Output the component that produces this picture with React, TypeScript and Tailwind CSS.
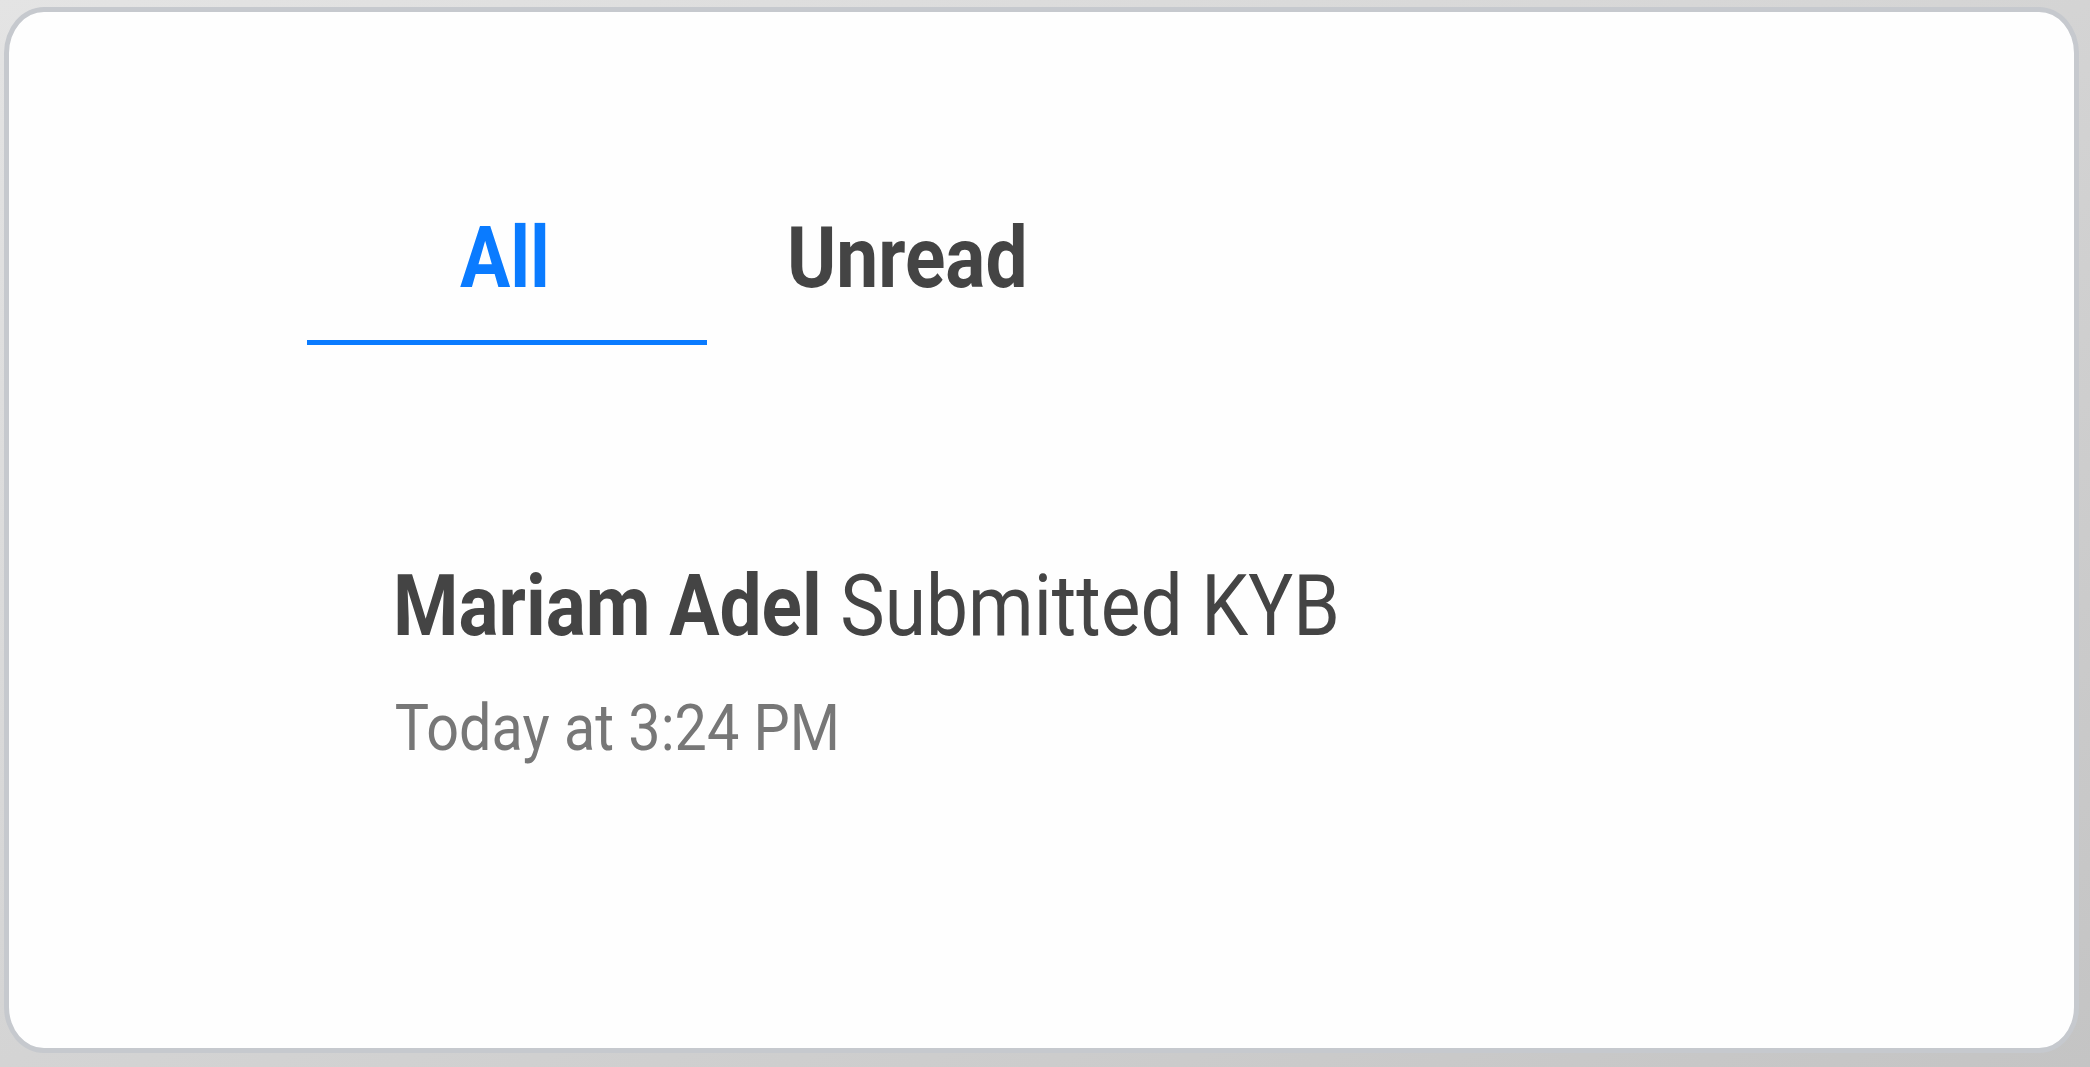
import { useState } from 'react'

type Tab = 'all' | 'unread'

interface INotification {
   name: string
   action: string
   time: string
}

const notifications: INotification[] = [
   { name: 'Mariam Adel', action: 'Submitted KYB', time: 'Today at 3:24 PM' },
]

export default function App() {
   const [tab, setTab] = useState<Tab>('all')

   return (
      <div
         className="w-[2090px] h-[1067px] overflow-hidden bg-gradient-to-br from-[#e4e4e4] via-[#d4d4d4] to-[#c4c4c4] pt-[7px] pl-[4px]"
         style={{ fontFamily: 'Roboto, "Liberation Sans", sans-serif' }}
      >
         <div className="w-[2075px] h-[1046px] rounded-[40px/46px] border-[5px] border-[#c6c9ce] bg-[#fefefe]">
            <div className="flex pl-[298px] pt-[203px]">
               <button
                  type="button"
                  className="flex flex-col items-start w-[400px]"
                  onClick={() => setTab('all')}
               >
                  <div className="pl-[153px]">
                     <span
                        className={`block text-[86px] leading-none font-bold scale-x-[0.87] origin-left ${
                           tab === 'all' ? 'text-[#0a7bff]' : 'text-[#444444]'
                        }`}
                     >
                        All
                     </span>
                  </div>
                  <span
                     className={`mt-[39px] h-[5px] w-[400px] ${
                        tab === 'all' ? 'bg-[#0a7bff]' : 'bg-transparent'
                     }`}
                  />
               </button>
               <button
                  type="button"
                  className="flex flex-col items-start w-[400px]"
                  onClick={() => setTab('unread')}
               >
                  <div className="pl-[80px]">
                     <span
                        className={`block text-[86px] leading-none font-bold scale-x-[0.87] origin-left ${
                           tab === 'unread' ? 'text-[#0a7bff]' : 'text-[#444444]'
                        }`}
                     >
                        Unread
                     </span>
                  </div>
                  <span
                     className={`mt-[39px] h-[5px] w-[400px] ${
                        tab === 'unread' ? 'bg-[#0a7bff]' : 'bg-transparent'
                     }`}
                  />
               </button>
            </div>

            <div className="flex flex-col pl-[384px] pt-[218px]">
               {notifications.map((n) => (
                  <div key={n.name} className="flex flex-col">
                     <p className="text-[86px] leading-none text-[#444444] whitespace-nowrap scale-x-[0.87] origin-left">
                        <span className="font-bold">{n.name}</span> {n.action}
                     </p>
                     <p className="mt-[47px] pl-[2px] text-[65px] leading-none text-[#777777] whitespace-nowrap scale-x-[0.885] origin-left">
                        {n.time}
                     </p>
                  </div>
               ))}
            </div>
         </div>
      </div>
   )
}
